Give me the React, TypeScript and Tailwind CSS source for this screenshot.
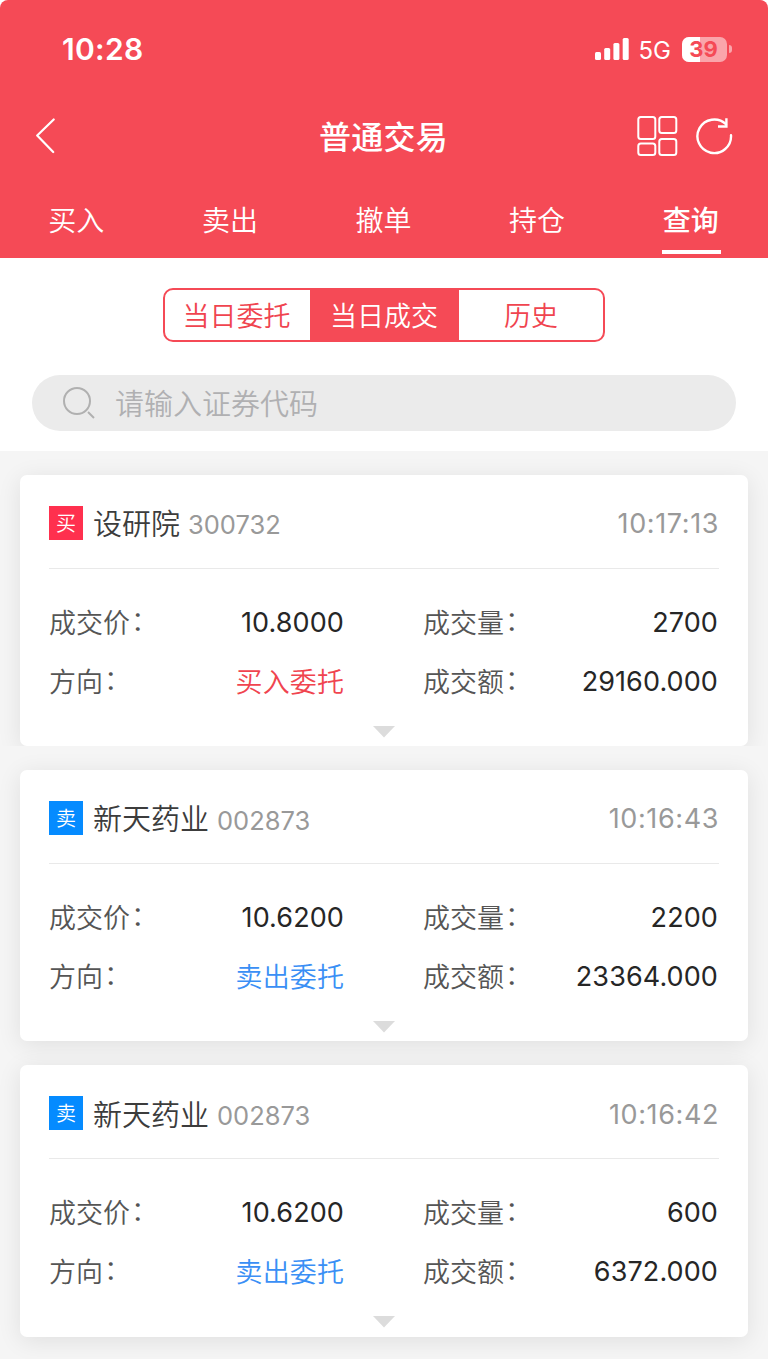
import React from 'react';
import clsx from 'clsx';

interface Deal {
  side: 'buy' | 'sell';
  name: string;
  code: string;
  time: string;
  price: string;
  volume: string;
  amount: string;
}

const tabs = ['买入', '卖出', '撤单', '持仓', '查询'];

const deals: Deal[] = [
  { side: 'buy', name: '设研院', code: '300732', time: '10:17:13', price: '10.8000', volume: '2700', amount: '29160.000' },
  { side: 'sell', name: '新天药业', code: '002873', time: '10:16:43', price: '10.6200', volume: '2200', amount: '23364.000' },
  { side: 'sell', name: '新天药业', code: '002873', time: '10:16:42', price: '10.6200', volume: '600', amount: '6372.000' },
];

const StatusBar: React.FC = () => (
  <div className="flex h-[98px] items-center justify-between pl-[62px] pr-[36px]">
    <span className="text-[30px] font-semibold leading-none tracking-[0.3px]">10:28</span>
    <div className="flex items-center">
      <svg width="34" height="22" viewBox="0 0 34 22" fill="currentColor">
        <rect x="0" y="14" width="6" height="8" rx="1.5" />
        <rect x="9.2" y="10" width="6" height="12" rx="1.5" />
        <rect x="18.4" y="5" width="6" height="17" rx="1.5" />
        <rect x="27.7" y="0" width="6" height="22" rx="1.5" />
      </svg>
      <span className="ml-[10px] mt-[3px] text-[24px] leading-none">5G</span>
      <div className="relative ml-[11px] h-[25px] w-[45px] overflow-hidden rounded-[7px] bg-white/50">
        <div className="h-full w-[18px] bg-white" />
        <span className="absolute inset-0 flex items-center justify-center pr-[2px] text-[22px] font-bold leading-none text-[#f54a56]">39</span>
      </div>
      <div className="ml-[2px] h-[8px] w-[3px] rounded-r-full bg-white/50" />
    </div>
  </div>
);

const NavBar: React.FC = () => (
  <div className="flex h-[76px] items-center justify-between pl-[36px] pr-[35px]">
    <div className="w-[97px]">
      <svg width="20" height="36" viewBox="0 0 20 36" fill="none" stroke="currentColor" strokeWidth="2.2" strokeLinecap="round" strokeLinejoin="round">
        <path d="M17.7 1.5 1.2 17.5 17.2 34" />
      </svg>
    </div>
    <h1 className="pr-[2px] pt-[4px] text-[32px] font-medium leading-none tracking-[0.3px]">普通交易</h1>
    <div className="flex w-[97px] items-center gap-[18px]">
      <svg width="42" height="42" viewBox="0 0 42 42" fill="none" stroke="currentColor" strokeWidth="2" className="shrink-0">
        <rect x="2.3" y="2" width="17" height="22" rx="2.5" />
        <rect x="23.3" y="2" width="17" height="16" rx="2.5" />
        <rect x="2.3" y="28.5" width="17" height="11.5" rx="2.5" />
        <rect x="23.3" y="24" width="17" height="16" rx="2.5" />
      </svg>
      <svg width="37" height="38" viewBox="0 0 37 38" fill="none" stroke="currentColor" strokeWidth="2.4" className="shrink-0">
        <path d="M35 18.2A16.8 16.8 0 1 1 29.9 7.2" strokeLinecap="round" />
        <path d="M30.4 1.2v8.3h-8.4" />
      </svg>
    </div>
  </div>
);

const Field: React.FC<{ label: string; value: string; className?: string }> = ({ label, value, className }) => (
  <div className="flex items-center justify-between">
    <span className="flex pt-px text-[27px] font-[350] text-[#555]">
      {label}
      <span className="relative -top-[2px] left-px">：</span>
    </span>
    <span className={clsx('text-[27px] tracking-[0.1px]', className || 'text-[#262626]')}>{value}</span>
  </div>
);

const DealCard: React.FC<{ deal: Deal }> = ({ deal }) => {
  const buy = deal.side === 'buy';
  return (
    <div className="h-[271.2px] rounded-[7px] bg-white px-[29px] shadow-[0_4px_24px_rgba(0,0,0,0.09)]">
      <div className="flex h-[94px] items-center border-b border-[#e9e9e9]">
        <span className={clsx('mt-[2px] flex h-[34px] w-[34px] items-center justify-center pt-[3px] text-[20px] font-[350] text-white', buy ? 'bg-[#ff304e]' : 'bg-[#058bff]')}>
          {buy ? '买' : '卖'}
        </span>
        <span className="ml-[10px] mt-[7px] text-[29px] font-[350] text-[#3c3c3c]">{deal.name}</span>
        <span className="ml-[8px] mt-[8px] text-[25.5px] text-[#999]">{deal.code}</span>
        <span className="ml-auto mt-[6px] text-[27px] tracking-[0.6px] text-[#999]">{deal.time}</span>
      </div>
      <div className="grid auto-rows-[59px] grid-cols-[295px_295px] justify-between pr-px pt-[24px] leading-none">
        <Field label="成交价" value={deal.price} />
        <Field label="成交量" value={deal.volume} />
        <Field label="方向" value={buy ? '买入委托' : '卖出委托'} className={buy ? 'pt-px text-[#f0444f] font-[350]' : 'pt-px text-[#3a8ff5] font-[350]'} />
        <Field label="成交额" value={deal.amount} />
      </div>
      <svg width="22" height="12" viewBox="0 0 22 12" className="mx-auto mt-[15px]">
        <path d="M0 0h22L11 11.5z" fill="#dcdcdc" />
      </svg>
    </div>
  );
};

const App: React.FC = () => {
  return (
    <div className="h-[1359px] w-[768px] overflow-hidden bg-white font-['Inter','Noto_Sans_CJK_SC',sans-serif]">
      <header className="h-[258px] rounded-t-[8px] bg-[#f54a56] text-white">
        <StatusBar />
        <NavBar />
        <nav className="grid h-[84px] grid-cols-5">
          {tabs.map((tab, i) => (
            <div key={tab} className="flex flex-col items-center pr-[1px] pt-[24px]">
              <span className={clsx('text-[28px] leading-[46px]', i === 4 ? 'font-medium' : 'font-[350]')}>{tab}</span>
              {i === 4 && <span className="ml-px mt-[6px] h-[4px] w-[59px] bg-white" />}
            </div>
          ))}
        </nav>
      </header>

      <section className="h-[193px] px-[32px] pt-[30px]">
        <div className="mx-auto grid h-[54px] w-[442px] grid-cols-[145px_149px_144px] overflow-hidden rounded-[10px] border-2 border-[#f54a56] text-center text-[27px] font-[350] leading-[54px] text-[#f0444f]">
          <span className="pr-[2px]">当日委托</span>
          <span className="bg-[#f54a56] pr-px text-white">当日成交</span>
          <span>历史</span>
        </div>
        <div className="mt-[33px] flex h-[56px] items-center rounded-full bg-[#ebebeb] pl-[31px]">
          <svg width="32" height="32" viewBox="0 0 32 32" fill="none" stroke="#b0b0b0" strokeWidth="2">
            <circle cx="14" cy="14" r="13" />
            <path d="m25 25 6 6" />
          </svg>
          <span className="ml-[20px] pt-[4px] text-[29px] font-[350] text-[#b0b0b2]">请输入证券代码</span>
        </div>
      </section>

      <main className="h-[908px] bg-[#f5f5f5]">
        <div className="overflow-hidden px-[20px] pt-[24px]">
          <DealCard deal={deals[0]} />
        </div>
        <div className="space-y-[24px] px-[20px] pt-[24px]">
          {deals.slice(1).map((deal) => (
            <DealCard key={deal.time} deal={deal} />
          ))}
        </div>
      </main>
    </div>
  );
};

export default App;
